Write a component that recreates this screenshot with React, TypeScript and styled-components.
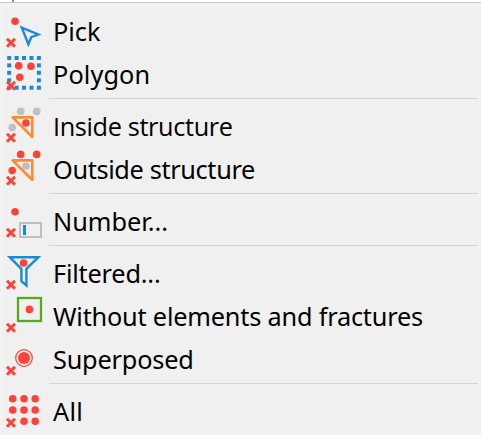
import React from "react";
import styled, { createGlobalStyle } from "styled-components";

const RED = "#ff4238";
const BLUE = "#1b8ad3";
const GRAY = "#bfbfbf";
const ORANGE = "#ff8a30";
const GREEN = "#54a91c";

const GlobalStyle = createGlobalStyle`
  body { margin: 0; background: #f2f2f2; overflow: hidden; }
`;

const Window = styled.div`
  width: 481px;
  height: 435px;
  display: flex;
  flex-direction: column;
  background: #f2f2f2;
`;

const TopStrip = styled.div`
  flex: none;
  height: 2px;
  padding-left: 12px;
  background: #fff;
  border-bottom: 1px solid #c8c8c8;
`;

const Tick = styled.div`
  width: 2px;
  height: 2px;
  background: #8c8c8c;
`;

const Menu = styled.ul`
  list-style: none;
  margin: 5px 3px 4px 4px;
  padding: 0;
  background: #f0f0f0;
`;

const Item = styled.li`
  display: flex;
  height: 43px;
`;

const Icon = styled.svg`
  flex: none;
  width: 49px;
  height: 43px;
`;

const Label = styled.span<{ $spacing: number; $plainCapital?: boolean }>`
  font-family: ${(p) => (p.$plainCapital ? '"Open Sans", "Noto Sans"' : '"Noto Sans", "Open Sans"')}, sans-serif;
  font-size: 25.3px;
  line-height: 43px;
  letter-spacing: ${(p) => p.$spacing}px;
  color: #000;
  white-space: nowrap;
  padding-top: 2px;
`;

const Separator = styled.li`
  height: 1px;
  margin: 0 0 0 45px;
  border: solid #f0f0f0;
  border-width: 4px 0;
  background: #d5d5d5;
`;

const Dot = ({ x, y, r = 3.8, fill = RED }: { x: number; y: number; r?: number; fill?: string }) => (
  <circle cx={x} cy={y} r={r} fill={fill} />
);

const Cross = () => (
  <path d="M7 30.8l8 8M15 30.8l-8 8" stroke={RED} strokeWidth="3" fill="none" />
);

const grid = [9.2, 16.6, 24, 31.5, 38.9];

const PickIcon = () => (
  <>
    <Dot x={15} y={13.3} />
    <path d="M21.8 19.6L38.3 26.5L31.2 29.2L28.4 36.3Z" fill="none" stroke={BLUE} strokeWidth="2.4" />
  </>
);

const PolygonIcon = () => (
  <>
    {grid.flatMap((x, i) =>
      grid.map((y, j) =>
        i % 4 === 0 || j % 4 === 0 ? (
          <rect key={`${i}-${j}`} x={x - 2} y={y - 4.2} width="4" height="4" fill={BLUE} />
        ) : null
      )
    )}
    <Dot x={18.7} y={14.7} />
    <Dot x={31} y={15.2} />
    <Dot x={19.8} y={26.3} />
  </>
);

const StructureIcon = ({ inner, outer }: { inner: string; outer: string }) => (
  <>
    <Dot x={20.7} y={8.4} fill={outer} />
    <Dot x={36.7} y={8.4} fill={outer} />
    <Dot x={12.2} y={24.6} fill={outer} />
    <path d="M12.6 14.4H32.3V34Z" fill="none" stroke={ORANGE} strokeWidth="2.6" strokeLinejoin="round" />
    <Dot x={26} y={20} r={3.8} fill={inner} />
  </>
);

const NumberIcon = () => (
  <>
    <Dot x={15} y={13.8} />
    <rect x="20" y="25" width="21" height="14" fill="none" stroke={GRAY} strokeWidth="2" />
    <rect x="23" y="27" width="3" height="10" fill={BLUE} />
  </>
);

const FilterIcon = () => (
  <>
    <path d="M9.7 7.2H38.4L26.4 18.8V35.4L21.4 31.1V18.8Z" fill="none" stroke={BLUE} strokeWidth="2.4" />
    <Dot x={23.6} y={13} />
  </>
);

const ElementIcon = () => (
  <>
    <rect x="18" y="5" width="23" height="23" fill="none" stroke={GREEN} strokeWidth="2.3" />
    <Dot x={29.4} y={16.4} />
  </>
);

const SuperposedIcon = () => (
  <>
    <circle cx="24" cy="22" r="8.3" fill="none" stroke={RED} strokeWidth="1.3" />
    <Dot x={24} y={22} r={6} />
  </>
);

const AllIcon = () => (
  <>
    {[10.7, 22, 33.3].flatMap((y) =>
      [12.7, 24, 35.2].map((x) => (y > 30 && x < 20 ? null : <Dot key={`${x}-${y}`} x={x} y={y} />))
    )}
  </>
);

interface Entry {
  label: string;
  spacing: number;
  plainCapital?: boolean;
  icon: React.ReactNode;
}

const groups: Entry[][] = [
  [
    { label: "Pick", spacing: 0, icon: <PickIcon /> },
    { label: "Polygon", spacing: 0.1, icon: <PolygonIcon /> },
  ],
  [
    {
      label: "Inside structure",
      spacing: -0.36,
      plainCapital: true,
      icon: <StructureIcon inner={RED} outer={GRAY} />,
    },
    { label: "Outside structure", spacing: -0.36, icon: <StructureIcon inner={GRAY} outer={RED} /> },
  ],
  [{ label: "Number...", spacing: 0, icon: <NumberIcon /> }],
  [
    { label: "Filtered...", spacing: -0.2, icon: <FilterIcon /> },
    { label: "Without elements and fractures", spacing: -0.2, icon: <ElementIcon /> },
    { label: "Superposed", spacing: -0.2, icon: <SuperposedIcon /> },
  ],
  [{ label: "All", spacing: 0.3, icon: <AllIcon /> }],
];

export default function App() {
  return (
    <>
      <GlobalStyle />
      <Window>
        <TopStrip>
          <Tick />
        </TopStrip>
        <Menu role="menu">
          {groups.map((group, i) => (
            <React.Fragment key={i}>
              {i > 0 && <Separator role="separator" />}
              {group.map(({ label, spacing, plainCapital, icon }) => (
                <Item key={label} role="menuitem">
                  <Icon viewBox="4 0 49 43" aria-hidden="true">
                    {icon}
                    <Cross />
                  </Icon>
                  <Label $spacing={spacing} $plainCapital={plainCapital}>
                    {label}
                  </Label>
                </Item>
              ))}
            </React.Fragment>
          ))}
        </Menu>
      </Window>
    </>
  );
}
